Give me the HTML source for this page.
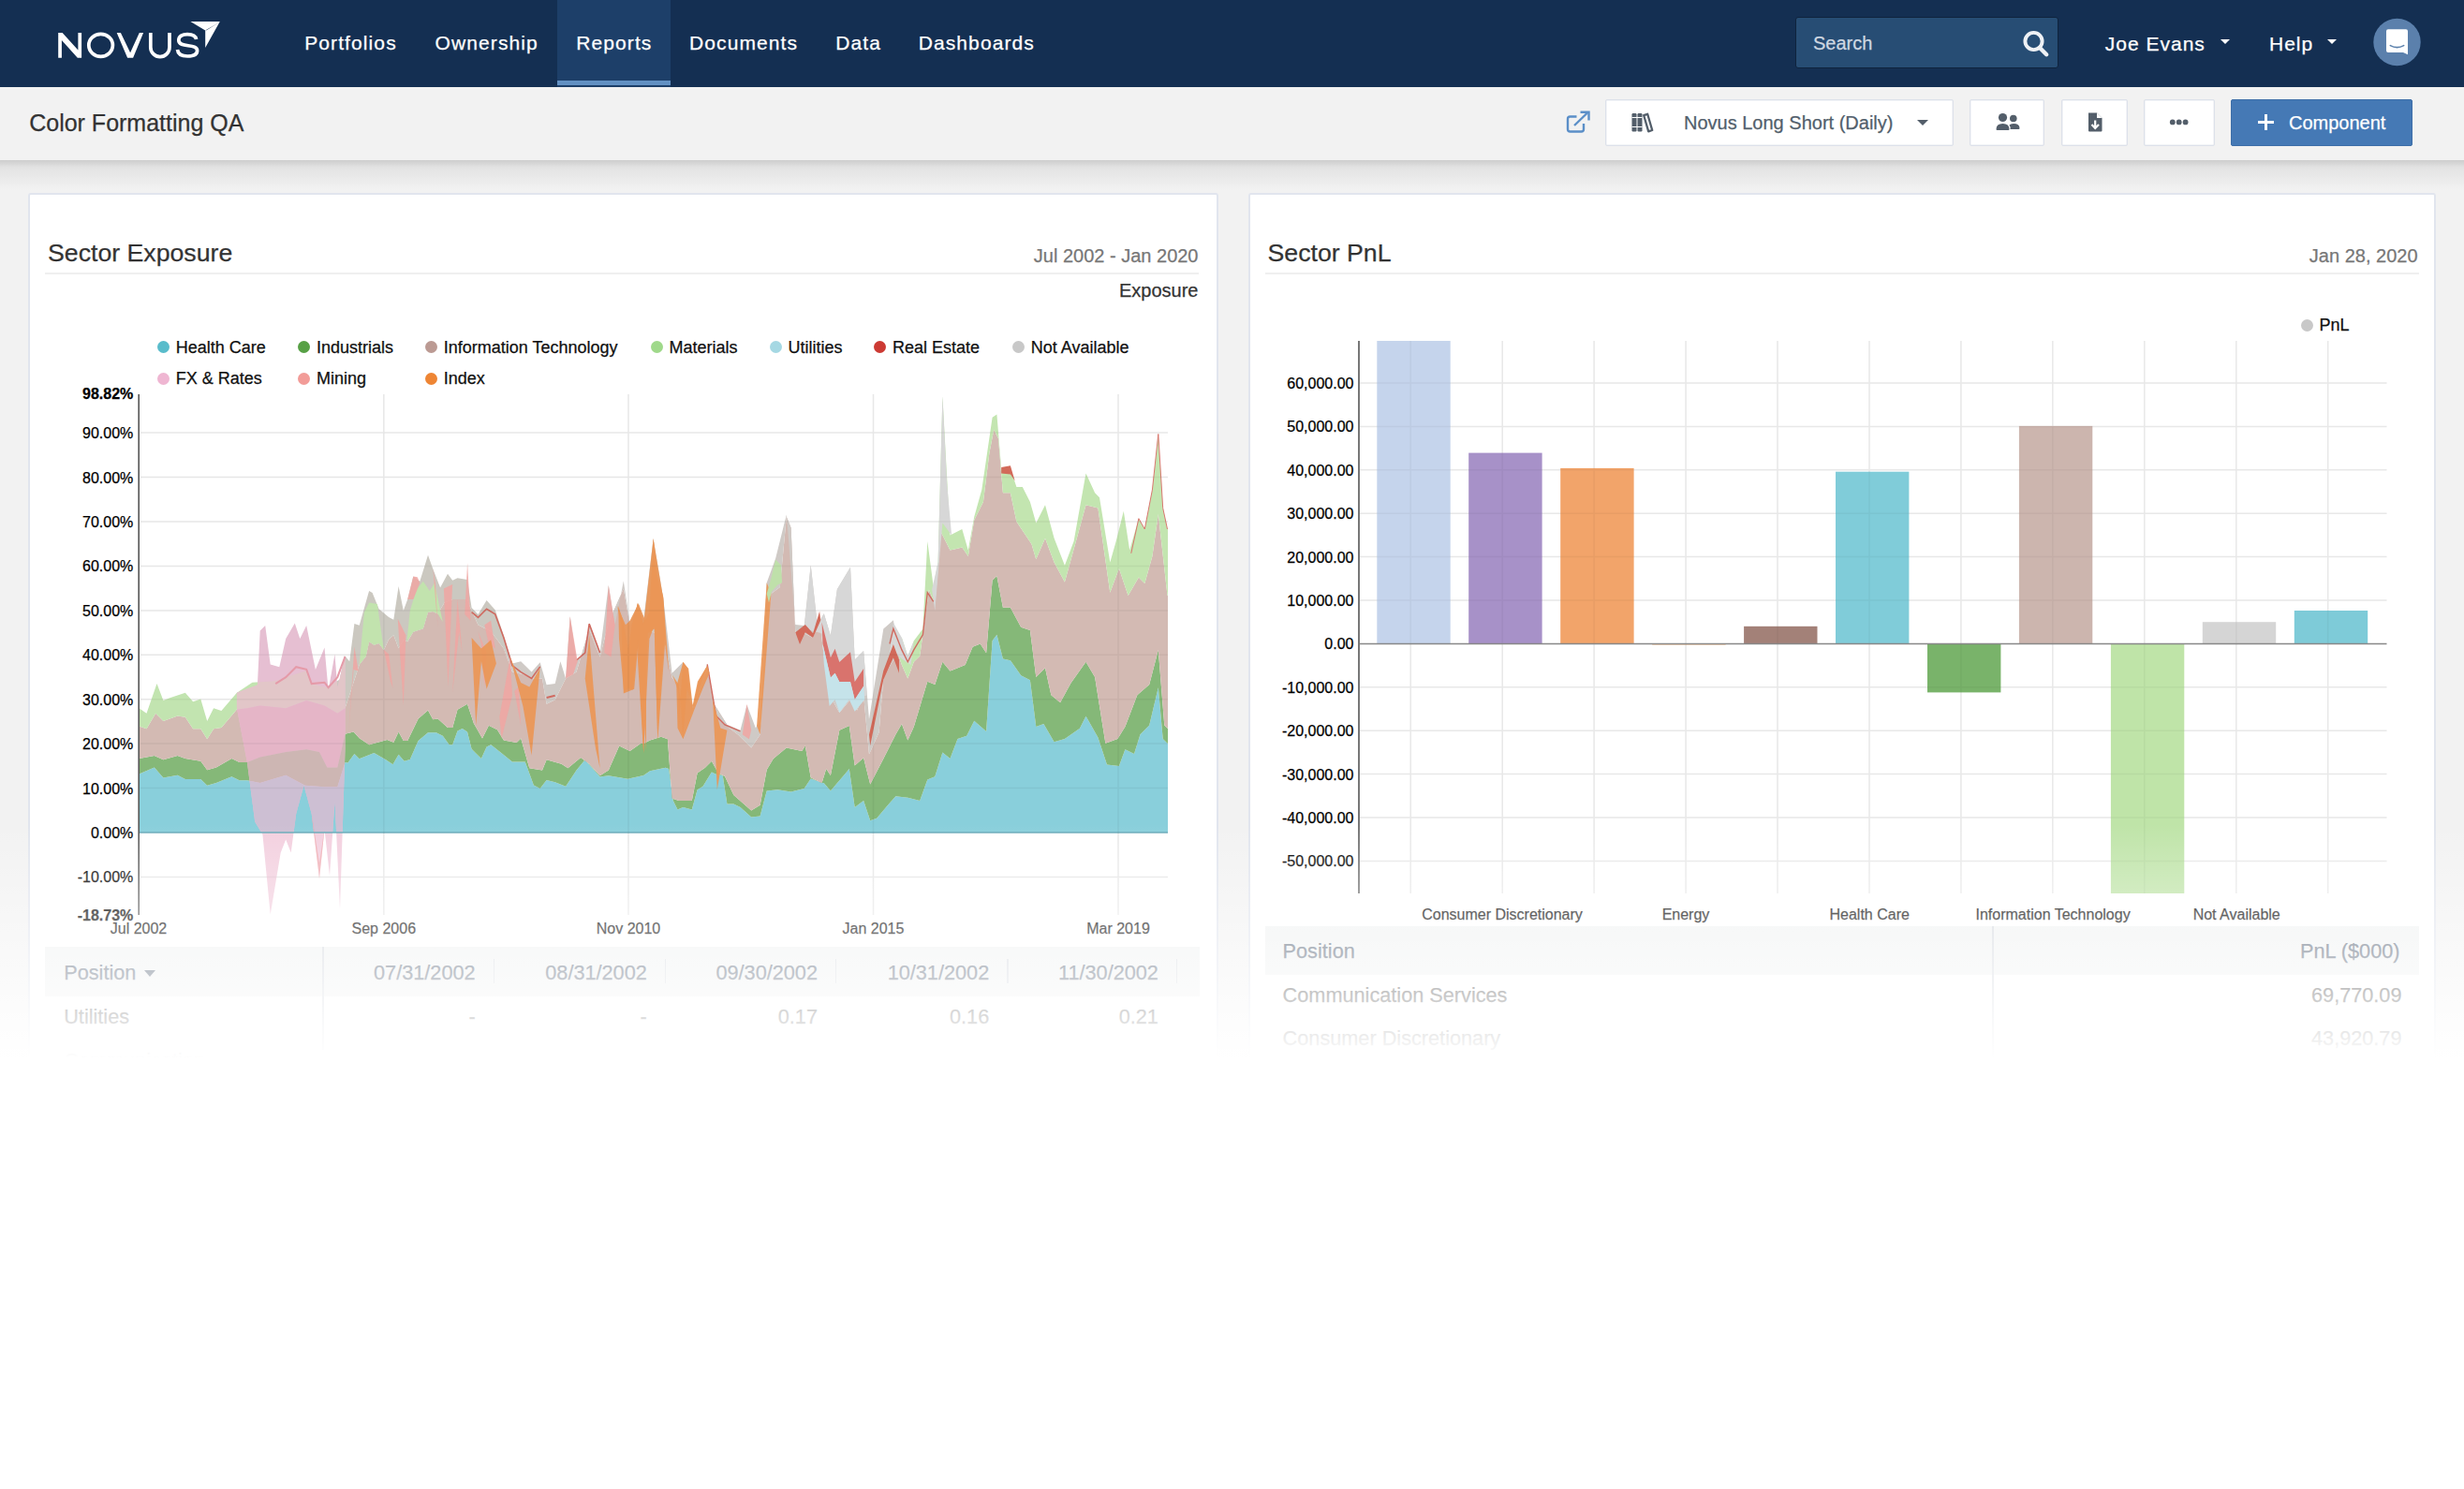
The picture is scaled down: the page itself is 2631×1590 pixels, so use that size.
<!DOCTYPE html>
<html><head><meta charset="utf-8"><title>Color Formatting QA</title>
<style>
html,body{margin:0;padding:0;}
body{width:2631px;height:1590px;position:relative;overflow:hidden;background:#f2f2f2;font-family:"Liberation Sans",sans-serif;}
.t{position:absolute;white-space:nowrap;line-height:1;-webkit-text-stroke:0.25px currentColor;}
#nav{position:absolute;left:0;top:0;width:2631px;height:93px;background:#142f52;}
#sub{position:absolute;left:0;top:93px;width:2631px;height:78px;background:#f2f2f2;}
#shadow{position:absolute;left:0;top:171px;width:2631px;height:32px;background:linear-gradient(#cdcdcd,#e3e3e3 25%,#f2f2f2);}
.btn{position:absolute;top:106px;height:48px;background:#fff;border:1px solid #dde1ea;box-shadow:inset 0 0 0 0.5px #e6e9ef;border-radius:2px;}
.card{position:absolute;top:206px;height:930px;background:#fff;border:2px solid #e1e5ee;border-radius:3px;}
#fade{position:absolute;left:0;top:880px;width:2631px;height:710px;background:linear-gradient(rgba(255,255,255,0) 0px,rgba(255,255,255,1) 250px,#fff 250px);}
</style></head><body>
<div id="nav"></div>
<div style="position:absolute;left:595px;top:0;width:121px;height:93px;background:#1d3f69"></div>
<div style="position:absolute;left:595px;top:86px;width:121px;height:5px;background:#6391c3"></div>
<svg style="position:absolute;left:0;top:0" width="260" height="93" viewBox="0 0 260 93">
<g fill="none" stroke="#fff" stroke-width="3.7" stroke-linejoin="miter">
<ellipse cx="107.6" cy="48.3" rx="12.8" ry="12"/>
<path d="M160.8,34.9 V50.5 A10.1,10.1 0 0 0 181,50.5 V34.9"/>
<path d="M209.6,42 C208.8,37.6 204.5,36.6 200,36.6 C195,36.6 190.8,38.6 190.8,43 C190.8,51.8 210.6,45.8 210.6,54 C210.6,58.3 206,60 200.2,60 C194.4,60 190,57.8 189.5,53"/>
</g>
<polygon fill="#fff" points="62.2,34.9 66.6,34.9 83.4,53.6 83.4,34.9 87.1,34.9 87.1,61.7 82.8,61.7 65.9,42.9 65.9,61.7 62.2,61.7"/>
<polygon fill="#fff" points="124.7,34.9 128.9,34.9 139.1,56.2 148.8,34.9 153.1,34.9 142.1,61.7 136.1,61.7"/>
<polygon fill="#fff" points="203.4,23.1 234.8,23.1 219.2,51 219.2,32.5"/>
<polygon fill="#142f52" points="219.2,32.5 233.5,24.2 220.6,32.2"/>
</svg>
<div class="t" style="top:35.42px;font-size:21px;color:#fff;letter-spacing:1.1px;left:325.20px;">Portfolios</div>
<div class="t" style="top:35.42px;font-size:21px;color:#fff;letter-spacing:1.1px;left:464.60px;">Ownership</div>
<div class="t" style="top:35.42px;font-size:21px;color:#fff;letter-spacing:1.1px;left:615.20px;">Reports</div>
<div class="t" style="top:35.42px;font-size:21px;color:#fff;letter-spacing:1.1px;left:736.00px;">Documents</div>
<div class="t" style="top:35.42px;font-size:21px;color:#fff;letter-spacing:1.1px;left:892.20px;">Data</div>
<div class="t" style="top:35.42px;font-size:21px;color:#fff;letter-spacing:1.1px;left:980.70px;">Dashboards</div>
<div style="position:absolute;left:1917px;top:18px;width:279px;height:53px;background:#274d74;border:1px solid #0f233d;border-radius:3px"></div>
<div class="t" style="top:36.27px;font-size:20px;color:#cfd8e2;left:1936.00px;">Search</div>
<svg style="position:absolute;left:2155px;top:28px" width="40" height="40" viewBox="0 0 40 40">
<circle cx="16.5" cy="16" r="9.1" fill="none" stroke="#eef1f5" stroke-width="3.9"/>
<line x1="23" y1="23" x2="30.2" y2="30.2" stroke="#eef1f5" stroke-width="4.4" stroke-linecap="round"/>
</svg>
<div class="t" style="top:35.72px;font-size:21px;color:#fff;letter-spacing:1px;left:2247.80px;">Joe Evans</div>
<div style="position:absolute;left:2370.5px;top:41.5px;width:0;height:0;border-left:5px solid transparent;border-right:5px solid transparent;border-top:5px solid #fff"></div>
<div class="t" style="top:35.72px;font-size:21px;color:#fff;letter-spacing:1px;left:2423.00px;">Help</div>
<div style="position:absolute;left:2484.5px;top:41.5px;width:0;height:0;border-left:5px solid transparent;border-right:5px solid transparent;border-top:5px solid #fff"></div>
<svg style="position:absolute;left:2530px;top:15px" width="60" height="60" viewBox="0 0 60 60">
<circle cx="29.5" cy="30" r="25.2" fill="#5b80ac"/>
<path d="M20,16.3 Q18,16.3 18,18.3 V39 Q18,41 20,41 H36 L41,43.2 V18.3 Q41,16.3 39,16.3 Z" fill="#fff"/>
<path d="M22.3,33.6 Q29.5,37.6 36.7,33.6" fill="none" stroke="#5b80ac" stroke-width="1.6" stroke-linecap="round"/>
</svg>
<div id="sub"></div>
<div id="shadow"></div>
<div class="t" style="top:118.64px;font-size:25px;color:#333;left:31.20px;">Color Formatting QA</div>
<svg style="position:absolute;left:1670px;top:117px" width="30" height="28" viewBox="0 0 30 28">
<path d="M13.5,7.5 H6.5 Q4,7.5 4,10 V21 Q4,23.5 6.5,23.5 H18.5 Q21,23.5 21,21 V15" fill="none" stroke="#5b8fc8" stroke-width="2.4"/>
<path d="M11,17 L25,3.5" stroke="#5b8fc8" stroke-width="2.4"/>
<path d="M17.5,2.8 H26.5 V11.5" fill="none" stroke="#5b8fc8" stroke-width="2.4"/>
</svg>
<div class="btn" style="left:1714px;width:370px"></div>
<svg style="position:absolute;left:1740px;top:118px" width="28" height="26" viewBox="0 0 28 26">
<rect x="2.5" y="3" width="5" height="19.5" rx="1.2" fill="#535e6a"/>
<rect x="8.5" y="3" width="5" height="19.5" rx="1.2" fill="#535e6a"/>
<path d="M2.5,7.5 H13.5 M2.5,17.5 H13.5" stroke="#fff" stroke-width="1"/>
<path d="M15.2,5.2 L19.2,3.8 L24.2,21 L20.2,22.4 Z" fill="none" stroke="#535e6a" stroke-width="2.3" stroke-linejoin="round"/>
</svg>
<div class="t" style="top:120.67px;font-size:20px;color:#525f6c;left:1798.00px;">Novus Long Short (Daily)</div>
<div style="position:absolute;left:2046.5px;top:128px;width:0;height:0;border-left:6px solid transparent;border-right:6px solid transparent;border-top:6.5px solid #535e6a"></div>
<div class="btn" style="left:2103px;width:78px"></div>
<svg style="position:absolute;left:2128px;top:118px" width="32" height="24" viewBox="0 0 32 24">
<circle cx="10.5" cy="7.5" r="4.6" fill="#535e6a"/>
<circle cx="21.8" cy="8.5" r="3.8" fill="#535e6a"/>
<path d="M3.5,20 Q3.5,14 10.5,14 Q17.5,14 17.5,20 Q17.5,21 16.5,21 H4.5 Q3.5,21 3.5,20 Z" fill="#535e6a"/>
<path d="M18.5,20 H27.5 Q28.5,20 28.5,19 Q28.5,14 22,14 Q18.5,14 17.5,15.5 Q19,17.5 18.5,20 Z" fill="#535e6a"/>
</svg>
<div class="btn" style="left:2201px;width:69px"></div>
<svg style="position:absolute;left:2226px;top:118px" width="22" height="26" viewBox="0 0 22 26">
<path d="M4,2.5 H13 L18.5,8 V21.5 Q18.5,22.5 17.5,22.5 H5 Q4,22.5 4,21.5 Z" fill="#535e6a"/>
<path d="M13,2.5 V8 H18.5" fill="#fff"/>
<path d="M11.2,10.5 V18 M7.5,15 L11.2,19 L15,15" fill="none" stroke="#fff" stroke-width="2.2"/>
</svg>
<div class="btn" style="left:2289px;width:74px"></div>
<svg style="position:absolute;left:2314px;top:125px" width="28" height="12" viewBox="0 0 28 12">
<circle cx="5.8" cy="5.4" r="2.9" fill="#535e6a"/><circle cx="12.7" cy="5.4" r="2.9" fill="#535e6a"/><circle cx="19.6" cy="5.4" r="2.9" fill="#535e6a"/>
</svg>
<div style="position:absolute;left:2382px;top:106px;width:192px;height:48px;background:#4579b5;border:1px solid #3d6ea8;border-radius:2px"></div>
<div style="position:absolute;left:2410.5px;top:129px;width:17.5px;height:3.4px;background:#fff"></div>
<div style="position:absolute;left:2417.6px;top:121.8px;width:3.4px;height:17.5px;background:#fff"></div>
<div class="t" style="top:120.77px;font-size:20px;color:#fff;left:2444.00px;">Component</div>
<div class="card" style="left:30px;width:1267px"></div>
<div class="card" style="left:1333px;width:1264px"></div>
<div style="position:absolute;left:48px;top:291px;width:1232px;height:1.5px;background:#efefef"></div>
<div style="position:absolute;left:1351px;top:291px;width:1232px;height:1.5px;background:#efefef"></div>
<div class="t" style="top:257.20px;font-size:26.7px;color:#333;left:51.00px;">Sector Exposure</div>
<div class="t" style="top:262.57px;font-size:20px;color:#777;right:1351.50px;">Jul 2002 - Jan 2020</div>
<div class="t" style="top:300.37px;font-size:20px;color:#333;right:1351.50px;">Exposure</div>
<div class="t" style="top:256.90px;font-size:26.7px;color:#333;left:1353.50px;">Sector PnL</div>
<div class="t" style="top:262.57px;font-size:20px;color:#777;right:49.50px;">Jan 28, 2020</div>
<div style="position:absolute;left:168.0px;top:364.1px;width:13px;height:13px;border-radius:50%;background:#59bccb"></div>
<div class="t" style="top:361.66px;font-size:18px;color:#111;left:187.80px;">Health Care</div>
<div style="position:absolute;left:318.2px;top:364.1px;width:13px;height:13px;border-radius:50%;background:#57a045"></div>
<div class="t" style="top:361.66px;font-size:18px;color:#111;left:338.00px;">Industrials</div>
<div style="position:absolute;left:454.0px;top:364.1px;width:13px;height:13px;border-radius:50%;background:#bb9a93"></div>
<div class="t" style="top:361.66px;font-size:18px;color:#111;left:473.80px;">Information Technology</div>
<div style="position:absolute;left:694.8px;top:364.1px;width:13px;height:13px;border-radius:50%;background:#9fd98a"></div>
<div class="t" style="top:361.66px;font-size:18px;color:#111;left:714.60px;">Materials</div>
<div style="position:absolute;left:821.8px;top:364.1px;width:13px;height:13px;border-radius:50%;background:#a5d8e3"></div>
<div class="t" style="top:361.66px;font-size:18px;color:#111;left:841.60px;">Utilities</div>
<div style="position:absolute;left:933.2px;top:364.1px;width:13px;height:13px;border-radius:50%;background:#cc3a33"></div>
<div class="t" style="top:361.66px;font-size:18px;color:#111;left:953.00px;">Real Estate</div>
<div style="position:absolute;left:1080.9px;top:364.1px;width:13px;height:13px;border-radius:50%;background:#c8c8c8"></div>
<div class="t" style="top:361.66px;font-size:18px;color:#111;left:1100.70px;">Not Available</div>
<div style="position:absolute;left:168.0px;top:397.5px;width:13px;height:13px;border-radius:50%;background:#efb6d2"></div>
<div class="t" style="top:395.06px;font-size:18px;color:#111;left:187.80px;">FX &amp; Rates</div>
<div style="position:absolute;left:318.2px;top:397.5px;width:13px;height:13px;border-radius:50%;background:#f29c98"></div>
<div class="t" style="top:395.06px;font-size:18px;color:#111;left:338.00px;">Mining</div>
<div style="position:absolute;left:454.0px;top:397.5px;width:13px;height:13px;border-radius:50%;background:#ee8534"></div>
<div class="t" style="top:395.06px;font-size:18px;color:#111;left:473.80px;">Index</div>
<div style="position:absolute;left:2456.7px;top:340.7px;width:13px;height:13px;border-radius:50%;background:#c8c8c8"></div>
<div class="t" style="top:338.06px;font-size:18px;color:#111;left:2476.50px;">PnL</div>
<svg style="position:absolute;left:0;top:0" width="2631" height="1590" viewBox="0 0 2631 1590"><line x1="150" y1="462.1" x2="1247" y2="462.1" stroke="#f3f3f3" stroke-width="1.5"/>
<line x1="150" y1="509.6" x2="1247" y2="509.6" stroke="#f3f3f3" stroke-width="1.5"/>
<line x1="150" y1="557.0" x2="1247" y2="557.0" stroke="#f3f3f3" stroke-width="1.5"/>
<line x1="150" y1="604.4" x2="1247" y2="604.4" stroke="#f3f3f3" stroke-width="1.5"/>
<line x1="150" y1="651.9" x2="1247" y2="651.9" stroke="#f3f3f3" stroke-width="1.5"/>
<line x1="150" y1="699.3" x2="1247" y2="699.3" stroke="#f3f3f3" stroke-width="1.5"/>
<line x1="150" y1="746.7" x2="1247" y2="746.7" stroke="#f3f3f3" stroke-width="1.5"/>
<line x1="150" y1="794.1" x2="1247" y2="794.1" stroke="#f3f3f3" stroke-width="1.5"/>
<line x1="150" y1="841.6" x2="1247" y2="841.6" stroke="#f3f3f3" stroke-width="1.5"/>
<line x1="150" y1="936.4" x2="1247" y2="936.4" stroke="#f3f3f3" stroke-width="1.5"/>
<line x1="409.8" y1="421" x2="409.8" y2="977" stroke="#f3f3f3" stroke-width="1.5"/>
<line x1="671" y1="421" x2="671" y2="977" stroke="#f3f3f3" stroke-width="1.5"/>
<line x1="932.5" y1="421" x2="932.5" y2="977" stroke="#f3f3f3" stroke-width="1.5"/>
<line x1="1194" y1="421" x2="1194" y2="977" stroke="#f3f3f3" stroke-width="1.5"/><polygon fill="#89cfdb" points="148.5,889 148.5,826.4 164.8,819.5 174.4,830.6 189.6,827.8 197.8,831.9 214.3,831.9 221.2,838.8 230.9,836.1 247.4,829.2 255.6,833.3 263.9,833.3 277.7,836.1 305.2,827.8 325.8,838.8 346.5,840.2 360.3,840.2 368.5,814.0 371.4,814.5 378.4,804.9 383.7,810.2 399.4,804.1 411.6,811.0 419.5,816.3 425.6,805.8 431.7,812.8 437.8,811.0 446.6,791.0 457.0,782.2 465.8,782.2 472.8,785.7 479.7,795.3 483.2,795.3 488.5,780.5 493.7,777.9 499.0,781.4 503.6,799.8 513.9,810.1 519.6,797.5 524.2,795.2 535.6,804.3 547.0,813.5 560.7,813.5 569.9,838.6 576.7,842.0 583.6,832.9 592.7,835.2 604.1,839.7 615.5,822.6 624.7,811.2 640.6,829.5 649.8,828.3 670.3,831.8 687.1,828.0 694.1,823.3 710.6,819.7 714.1,820.9 718.8,855.0 723.5,864.4 729.4,862.0 738.8,864.4 744.6,843.2 750.5,839.7 759.9,824.4 764.6,826.8 771.7,828.0 776.4,858.5 783.4,858.5 790.5,862.0 802.2,872.6 811.6,871.5 818.7,844.4 830.4,843.2 844.6,845.6 858.7,842.1 865.7,831.5 879.8,836.2 886.9,844.4 893.9,836.2 901.0,828.0 906.8,820.9 912.7,862.0 922.1,855.0 929.2,876.2 936.2,873.8 948.0,859.7 956.4,850.2 969.3,851.8 982.2,855.1 990.3,832.5 998.3,829.3 1006.4,803.5 1014.5,809.9 1022.5,789.0 1032.2,785.8 1040.2,769.7 1053.1,780.9 1059.6,684.3 1064.4,677.8 1070.9,703.6 1078.9,705.2 1090.2,721.3 1099.9,726.2 1106.3,776.1 1114.4,772.9 1125.6,792.2 1136.9,789.0 1153.0,777.7 1159.5,764.8 1172.4,787.4 1182.0,816.4 1194.9,818.0 1201.4,800.3 1211.0,805.1 1217.5,784.2 1227.2,774.5 1236.8,734.2 1241.7,789.0 1246.5,793.8 1247.0,793.8 1247,889"/>
<polygon fill="#85b878" points="148.5,809.9 164.8,807.1 174.4,811.3 189.6,807.1 197.8,809.9 214.3,812.7 221.2,822.3 230.9,819.5 247.4,809.9 255.6,814.0 263.9,814.0 277.7,808.5 305.2,803.0 327.2,800.3 341.0,803.0 349.3,819.5 360.3,819.5 368.5,783.7 371.4,783.1 377.6,781.4 383.7,788.3 394.1,795.3 413.4,790.1 420.3,792.7 425.6,781.4 430.8,791.0 435.2,791.0 446.6,767.4 457.0,758.6 462.3,768.3 467.5,767.4 478.0,777.0 483.2,777.0 488.5,757.8 499.0,751.7 505.9,772.4 515.0,788.4 521.9,774.7 531.0,779.2 537.9,790.6 551.6,792.9 556.2,788.4 565.3,820.3 579.0,822.6 583.6,811.2 599.5,815.8 606.4,820.3 620.1,808.9 629.2,815.8 640.6,828.3 649.8,822.6 661.2,796.4 672.6,802.1 684.0,794.1 687.1,793.9 694.1,790.4 705.9,786.8 712.9,789.2 717.6,852.6 724.7,855.0 738.8,855.0 744.6,825.6 752.9,819.7 759.9,812.7 767.0,825.6 774.0,829.1 783.4,849.1 802.2,865.6 811.6,859.7 818.7,822.1 825.7,810.3 839.8,798.6 856.3,802.1 859.8,796.2 865.7,830.3 877.5,836.2 882.2,820.9 886.9,828.0 896.3,779.8 906.8,775.1 912.7,817.4 922.1,809.2 929.2,837.4 943.3,810.3 956.4,784.2 962.9,772.9 969.3,790.6 975.8,776.1 990.3,727.8 998.3,731.0 1006.4,706.8 1014.5,716.5 1030.6,710.0 1038.6,690.7 1046.7,687.5 1053.1,697.2 1059.6,619.8 1064.4,615.0 1070.9,648.8 1078.9,648.8 1090.2,669.8 1099.9,673.0 1106.3,722.9 1116.0,713.3 1122.4,742.3 1132.1,750.3 1143.4,729.4 1159.5,706.8 1169.1,722.9 1180.4,793.8 1193.3,789.0 1201.4,776.1 1214.3,742.3 1227.2,731.0 1236.8,693.9 1243.3,774.5 1246.5,777.7 1247.0,777.7 1247.0,793.8 1246.5,793.8 1241.7,789.0 1236.8,734.2 1227.2,774.5 1217.5,784.2 1211.0,805.1 1201.4,800.3 1194.9,818.0 1182.0,816.4 1172.4,787.4 1159.5,764.8 1153.0,777.7 1136.9,789.0 1125.6,792.2 1114.4,772.9 1106.3,776.1 1099.9,726.2 1090.2,721.3 1078.9,705.2 1070.9,703.6 1064.4,677.8 1059.6,684.3 1053.1,780.9 1040.2,769.7 1032.2,785.8 1022.5,789.0 1014.5,809.9 1006.4,803.5 998.3,829.3 990.3,832.5 982.2,855.1 969.3,851.8 956.4,850.2 948.0,859.7 936.2,873.8 929.2,876.2 922.1,855.0 912.7,862.0 906.8,820.9 901.0,828.0 893.9,836.2 886.9,844.4 879.8,836.2 865.7,831.5 858.7,842.1 844.6,845.6 830.4,843.2 818.7,844.4 811.6,871.5 802.2,872.6 790.5,862.0 783.4,858.5 776.4,858.5 771.7,828.0 764.6,826.8 759.9,824.4 750.5,839.7 744.6,843.2 738.8,864.4 729.4,862.0 723.5,864.4 718.8,855.0 714.1,820.9 710.6,819.7 694.1,823.3 687.1,828.0 670.3,831.8 649.8,828.3 640.6,829.5 624.7,811.2 615.5,822.6 604.1,839.7 592.7,835.2 583.6,832.9 576.7,842.0 569.9,838.6 560.7,813.5 547.0,813.5 535.6,804.3 524.2,795.2 519.6,797.5 513.9,810.1 503.6,799.8 499.0,781.4 493.7,777.9 488.5,780.5 483.2,795.3 479.7,795.3 472.8,785.7 465.8,782.2 457.0,782.2 446.6,791.0 437.8,811.0 431.7,812.8 425.6,805.8 419.5,816.3 411.6,811.0 399.4,804.1 383.7,810.2 378.4,804.9 371.4,814.5 368.5,814.0 360.3,840.2 346.5,840.2 325.8,838.8 305.2,827.8 277.7,836.1 263.9,833.3 255.6,833.3 247.4,829.2 230.9,836.1 221.2,838.8 214.3,831.9 197.8,831.9 189.6,827.8 174.4,830.6 164.8,819.5 148.5,826.4"/>
<polygon fill="#d3bab3" points="148.5,775.5 156.5,778.2 166.2,761.7 174.4,770.0 189.6,764.5 197.8,765.8 206.1,778.2 214.3,778.2 221.2,789.3 228.1,778.2 236.4,776.9 252.9,757.6 263.9,756.2 277.7,753.5 305.2,756.2 327.2,748.0 346.5,753.5 360.3,761.7 368.5,756.2 372.3,744.7 383.7,709.7 390.7,701.0 394.1,685.3 399.4,688.8 404.6,687.0 409.9,694.0 415.1,682.7 420.3,678.3 425.6,692.3 430.8,683.5 435.2,685.3 441.3,674.8 451.8,671.3 457.0,653.8 462.3,653.0 467.5,655.6 474.5,643.4 483.2,639.9 499.0,639.9 501.3,646.8 510.5,667.3 524.2,674.2 537.9,692.5 547.0,717.6 558.4,719.9 569.9,724.4 579.0,724.4 583.6,751.8 592.7,747.3 604.1,724.4 615.5,717.6 629.2,671.9 640.6,701.6 649.8,665.0 665.8,628.5 672.6,667.3 681.8,655.9 687.1,671.6 708.2,678.7 717.6,723.4 734.1,744.5 741.1,756.3 755.2,714.0 762.3,751.6 778.7,777.4 788.1,784.5 802.2,798.6 811.6,784.5 816.3,685.7 823.4,634.0 832.8,627.0 839.8,551.8 844.6,563.5 849.3,676.3 858.7,676.3 868.1,681.0 875.1,662.2 884.5,739.8 896.3,761.0 908.0,746.9 915.1,758.6 922.1,742.2 928.0,805.6 938.6,782.1 943.3,723.4 953.9,704.6 956.4,690.7 962.9,710.0 969.3,724.5 975.8,706.8 982.2,700.4 991.9,629.5 998.3,645.6 1004.8,568.2 1014.5,587.6 1027.3,584.4 1033.8,594.0 1040.2,555.4 1049.9,536.0 1056.3,484.5 1061.2,458.7 1066.0,468.3 1070.9,526.3 1078.9,526.3 1085.4,557.0 1101.5,581.1 1106.3,597.2 1116.0,574.7 1125.6,600.5 1136.9,621.4 1149.8,574.7 1159.5,539.2 1172.4,542.5 1185.3,632.7 1194.9,606.9 1204.6,635.9 1215.9,616.6 1222.3,623.0 1230.4,594.0 1236.8,548.9 1246.5,635.9 1247.0,635.9 1247.0,777.7 1246.5,777.7 1243.3,774.5 1236.8,693.9 1227.2,731.0 1214.3,742.3 1201.4,776.1 1193.3,789.0 1180.4,793.8 1169.1,722.9 1159.5,706.8 1143.4,729.4 1132.1,750.3 1122.4,742.3 1116.0,713.3 1106.3,722.9 1099.9,673.0 1090.2,669.8 1078.9,648.8 1070.9,648.8 1064.4,615.0 1059.6,619.8 1053.1,697.2 1046.7,687.5 1038.6,690.7 1030.6,710.0 1014.5,716.5 1006.4,706.8 998.3,731.0 990.3,727.8 975.8,776.1 969.3,790.6 962.9,772.9 956.4,784.2 943.3,810.3 929.2,837.4 922.1,809.2 912.7,817.4 906.8,775.1 896.3,779.8 886.9,828.0 882.2,820.9 877.5,836.2 865.7,830.3 859.8,796.2 856.3,802.1 839.8,798.6 825.7,810.3 818.7,822.1 811.6,859.7 802.2,865.6 783.4,849.1 774.0,829.1 767.0,825.6 759.9,812.7 752.9,819.7 744.6,825.6 738.8,855.0 724.7,855.0 717.6,852.6 712.9,789.2 705.9,786.8 694.1,790.4 687.1,793.9 684.0,794.1 672.6,802.1 661.2,796.4 649.8,822.6 640.6,828.3 629.2,815.8 620.1,808.9 606.4,820.3 599.5,815.8 583.6,811.2 579.0,822.6 565.3,820.3 556.2,788.4 551.6,792.9 537.9,790.6 531.0,779.2 521.9,774.7 515.0,788.4 505.9,772.4 499.0,751.7 488.5,757.8 483.2,777.0 478.0,777.0 467.5,767.4 462.3,768.3 457.0,758.6 446.6,767.4 435.2,791.0 430.8,791.0 425.6,781.4 420.3,792.7 413.4,790.1 394.1,795.3 383.7,788.3 377.6,781.4 371.4,783.1 368.5,783.7 360.3,819.5 349.3,819.5 341.0,803.0 327.2,800.3 305.2,803.0 277.7,808.5 263.9,814.0 255.6,814.0 247.4,809.9 230.9,819.5 221.2,822.3 214.3,812.7 197.8,809.9 189.6,807.1 174.4,811.3 164.8,807.1 148.5,809.9"/>
<defs>
<clipPath id="cg1"><rect x="0" y="380" width="360" height="620"/></clipPath>
<clipPath id="cg2"><rect x="360" y="380" width="180" height="620"/></clipPath>
<clipPath id="cg4"><rect x="540" y="380" width="415" height="620"/></clipPath>
<clipPath id="cg5"><rect x="955" y="380" width="345" height="620"/></clipPath>
</defs>
<polygon clip-path="url(#cg1)" fill="#c2e4b0" points="148.5,756.2 156.5,761.7 167.5,730.1 174.4,748.0 181.3,745.2 197.8,739.7 206.1,749.3 214.3,746.6 221.2,770.0 228.1,756.2 236.4,759.0 252.9,739.7 269.4,728.7 294.2,727.3 313.5,720.4 327.2,716.3 332.7,730.1 349.3,734.2 362.7,725.5 367.9,700.1 373.2,706.2 378.4,666.1 383.7,667.8 394.1,631.1 397.6,632.9 404.6,650.3 415.1,659.1 420.3,661.7 425.6,625.9 430.8,652.1 435.2,639.9 441.3,615.4 448.3,620.7 457.0,592.7 462.3,607.6 470.1,627.6 478.0,612.8 483.2,619.8 488.5,617.2 499.0,618.9 503.6,649.1 510.5,655.9 519.6,641.1 528.7,651.3 537.9,678.7 547.0,708.4 556.2,706.2 567.6,717.6 576.7,707.3 583.6,731.3 592.7,730.1 598.4,706.2 604.1,724.4 608.7,658.2 615.5,705.0 624.7,697.0 629.2,665.0 640.6,697.0 649.8,625.1 656.6,667.3 665.8,620.5 672.6,665.0 681.8,644.5 687.1,662.2 697.6,575.3 708.2,638.7 717.6,718.7 729.4,706.9 738.8,756.3 755.2,709.3 764.6,763.3 774.0,772.7 790.5,779.8 797.5,752.7 806.9,777.4 811.6,768.0 818.7,622.3 828.1,596.4 839.8,549.4 849.3,666.9 858.7,668.1 865.7,603.5 872.8,666.9 879.8,655.2 886.9,678.7 893.9,629.3 908.0,605.8 912.7,704.6 922.1,695.1 928.0,768.0 943.3,671.6 953.9,662.2 956.4,677.8 962.9,681.0 969.3,700.4 975.8,684.3 985.4,671.4 990.3,577.9 996.7,626.3 1001.6,600.5 1006.4,423.2 1014.5,571.5 1027.3,565.0 1033.8,587.6 1040.2,552.1 1048.3,523.1 1059.6,445.8 1064.4,442.6 1069.2,500.6 1078.9,500.6 1085.4,519.9 1091.8,519.9 1099.9,536.0 1106.3,558.6 1116.0,539.2 1125.6,574.7 1136.9,603.7 1146.6,577.9 1159.5,505.4 1169.1,526.3 1174.0,531.2 1185.3,600.5 1191.7,577.9 1199.8,545.7 1206.2,587.6 1215.9,553.7 1222.3,565.0 1230.4,523.1 1236.8,463.5 1241.7,542.5 1246.5,565.0 1247.0,565.0 1247.0,635.9 1246.5,635.9 1236.8,548.9 1230.4,594.0 1222.3,623.0 1215.9,616.6 1204.6,635.9 1194.9,606.9 1185.3,632.7 1172.4,542.5 1159.5,539.2 1149.8,574.7 1136.9,621.4 1125.6,600.5 1116.0,574.7 1106.3,597.2 1101.5,581.1 1085.4,557.0 1078.9,526.3 1070.9,526.3 1066.0,468.3 1061.2,458.7 1056.3,484.5 1049.9,536.0 1040.2,555.4 1033.8,594.0 1027.3,584.4 1014.5,587.6 1004.8,568.2 998.3,645.6 991.9,629.5 982.2,700.4 975.8,706.8 969.3,724.5 962.9,710.0 956.4,690.7 953.9,704.6 943.3,723.4 938.6,782.1 928.0,805.6 922.1,742.2 915.1,758.6 908.0,746.9 896.3,761.0 884.5,739.8 875.1,662.2 868.1,681.0 858.7,676.3 849.3,676.3 844.6,563.5 839.8,551.8 832.8,627.0 823.4,634.0 816.3,685.7 811.6,784.5 802.2,798.6 788.1,784.5 778.7,777.4 762.3,751.6 755.2,714.0 741.1,756.3 734.1,744.5 717.6,723.4 708.2,678.7 687.1,671.6 681.8,655.9 672.6,667.3 665.8,628.5 649.8,665.0 640.6,701.6 629.2,671.9 615.5,717.6 604.1,724.4 592.7,747.3 583.6,751.8 579.0,724.4 569.9,724.4 558.4,719.9 547.0,717.6 537.9,692.5 524.2,674.2 510.5,667.3 501.3,646.8 499.0,639.9 483.2,639.9 474.5,643.4 467.5,655.6 462.3,653.0 457.0,653.8 451.8,671.3 441.3,674.8 435.2,685.3 430.8,683.5 425.6,692.3 420.3,678.3 415.1,682.7 409.9,694.0 404.6,687.0 399.4,688.8 394.1,685.3 390.7,701.0 383.7,709.7 372.3,744.7 368.5,756.2 360.3,761.7 346.5,753.5 327.2,748.0 305.2,756.2 277.7,753.5 263.9,756.2 252.9,757.6 236.4,776.9 228.1,778.2 221.2,789.3 214.3,778.2 206.1,778.2 197.8,765.8 189.6,764.5 174.4,770.0 166.2,761.7 156.5,778.2 148.5,775.5"/>
<polygon clip-path="url(#cg2)" fill="#cbc8c0" points="148.5,756.2 156.5,761.7 167.5,730.1 174.4,748.0 181.3,745.2 197.8,739.7 206.1,749.3 214.3,746.6 221.2,770.0 228.1,756.2 236.4,759.0 252.9,739.7 269.4,728.7 294.2,727.3 313.5,720.4 327.2,716.3 332.7,730.1 349.3,734.2 362.7,725.5 367.9,700.1 373.2,706.2 378.4,666.1 383.7,667.8 394.1,631.1 397.6,632.9 404.6,650.3 415.1,659.1 420.3,661.7 425.6,625.9 430.8,652.1 435.2,639.9 441.3,615.4 448.3,620.7 457.0,592.7 462.3,607.6 470.1,627.6 478.0,612.8 483.2,619.8 488.5,617.2 499.0,618.9 503.6,649.1 510.5,655.9 519.6,641.1 528.7,651.3 537.9,678.7 547.0,708.4 556.2,706.2 567.6,717.6 576.7,707.3 583.6,731.3 592.7,730.1 598.4,706.2 604.1,724.4 608.7,658.2 615.5,705.0 624.7,697.0 629.2,665.0 640.6,697.0 649.8,625.1 656.6,667.3 665.8,620.5 672.6,665.0 681.8,644.5 687.1,662.2 697.6,575.3 708.2,638.7 717.6,718.7 729.4,706.9 738.8,756.3 755.2,709.3 764.6,763.3 774.0,772.7 790.5,779.8 797.5,752.7 806.9,777.4 811.6,768.0 818.7,622.3 828.1,596.4 839.8,549.4 849.3,666.9 858.7,668.1 865.7,603.5 872.8,666.9 879.8,655.2 886.9,678.7 893.9,629.3 908.0,605.8 912.7,704.6 922.1,695.1 928.0,768.0 943.3,671.6 953.9,662.2 956.4,677.8 962.9,681.0 969.3,700.4 975.8,684.3 985.4,671.4 990.3,577.9 996.7,626.3 1001.6,600.5 1006.4,423.2 1014.5,571.5 1027.3,565.0 1033.8,587.6 1040.2,552.1 1048.3,523.1 1059.6,445.8 1064.4,442.6 1069.2,500.6 1078.9,500.6 1085.4,519.9 1091.8,519.9 1099.9,536.0 1106.3,558.6 1116.0,539.2 1125.6,574.7 1136.9,603.7 1146.6,577.9 1159.5,505.4 1169.1,526.3 1174.0,531.2 1185.3,600.5 1191.7,577.9 1199.8,545.7 1206.2,587.6 1215.9,553.7 1222.3,565.0 1230.4,523.1 1236.8,463.5 1241.7,542.5 1246.5,565.0 1247.0,565.0 1247.0,635.9 1246.5,635.9 1236.8,548.9 1230.4,594.0 1222.3,623.0 1215.9,616.6 1204.6,635.9 1194.9,606.9 1185.3,632.7 1172.4,542.5 1159.5,539.2 1149.8,574.7 1136.9,621.4 1125.6,600.5 1116.0,574.7 1106.3,597.2 1101.5,581.1 1085.4,557.0 1078.9,526.3 1070.9,526.3 1066.0,468.3 1061.2,458.7 1056.3,484.5 1049.9,536.0 1040.2,555.4 1033.8,594.0 1027.3,584.4 1014.5,587.6 1004.8,568.2 998.3,645.6 991.9,629.5 982.2,700.4 975.8,706.8 969.3,724.5 962.9,710.0 956.4,690.7 953.9,704.6 943.3,723.4 938.6,782.1 928.0,805.6 922.1,742.2 915.1,758.6 908.0,746.9 896.3,761.0 884.5,739.8 875.1,662.2 868.1,681.0 858.7,676.3 849.3,676.3 844.6,563.5 839.8,551.8 832.8,627.0 823.4,634.0 816.3,685.7 811.6,784.5 802.2,798.6 788.1,784.5 778.7,777.4 762.3,751.6 755.2,714.0 741.1,756.3 734.1,744.5 717.6,723.4 708.2,678.7 687.1,671.6 681.8,655.9 672.6,667.3 665.8,628.5 649.8,665.0 640.6,701.6 629.2,671.9 615.5,717.6 604.1,724.4 592.7,747.3 583.6,751.8 579.0,724.4 569.9,724.4 558.4,719.9 547.0,717.6 537.9,692.5 524.2,674.2 510.5,667.3 501.3,646.8 499.0,639.9 483.2,639.9 474.5,643.4 467.5,655.6 462.3,653.0 457.0,653.8 451.8,671.3 441.3,674.8 435.2,685.3 430.8,683.5 425.6,692.3 420.3,678.3 415.1,682.7 409.9,694.0 404.6,687.0 399.4,688.8 394.1,685.3 390.7,701.0 383.7,709.7 372.3,744.7 368.5,756.2 360.3,761.7 346.5,753.5 327.2,748.0 305.2,756.2 277.7,753.5 263.9,756.2 252.9,757.6 236.4,776.9 228.1,778.2 221.2,789.3 214.3,778.2 206.1,778.2 197.8,765.8 189.6,764.5 174.4,770.0 166.2,761.7 156.5,778.2 148.5,775.5"/>
<polygon clip-path="url(#cg4)" fill="#cfcac6" points="148.5,756.2 156.5,761.7 167.5,730.1 174.4,748.0 181.3,745.2 197.8,739.7 206.1,749.3 214.3,746.6 221.2,770.0 228.1,756.2 236.4,759.0 252.9,739.7 269.4,728.7 294.2,727.3 313.5,720.4 327.2,716.3 332.7,730.1 349.3,734.2 362.7,725.5 367.9,700.1 373.2,706.2 378.4,666.1 383.7,667.8 394.1,631.1 397.6,632.9 404.6,650.3 415.1,659.1 420.3,661.7 425.6,625.9 430.8,652.1 435.2,639.9 441.3,615.4 448.3,620.7 457.0,592.7 462.3,607.6 470.1,627.6 478.0,612.8 483.2,619.8 488.5,617.2 499.0,618.9 503.6,649.1 510.5,655.9 519.6,641.1 528.7,651.3 537.9,678.7 547.0,708.4 556.2,706.2 567.6,717.6 576.7,707.3 583.6,731.3 592.7,730.1 598.4,706.2 604.1,724.4 608.7,658.2 615.5,705.0 624.7,697.0 629.2,665.0 640.6,697.0 649.8,625.1 656.6,667.3 665.8,620.5 672.6,665.0 681.8,644.5 687.1,662.2 697.6,575.3 708.2,638.7 717.6,718.7 729.4,706.9 738.8,756.3 755.2,709.3 764.6,763.3 774.0,772.7 790.5,779.8 797.5,752.7 806.9,777.4 811.6,768.0 818.7,622.3 828.1,596.4 839.8,549.4 849.3,666.9 858.7,668.1 865.7,603.5 872.8,666.9 879.8,655.2 886.9,678.7 893.9,629.3 908.0,605.8 912.7,704.6 922.1,695.1 928.0,768.0 943.3,671.6 953.9,662.2 956.4,677.8 962.9,681.0 969.3,700.4 975.8,684.3 985.4,671.4 990.3,577.9 996.7,626.3 1001.6,600.5 1006.4,423.2 1014.5,571.5 1027.3,565.0 1033.8,587.6 1040.2,552.1 1048.3,523.1 1059.6,445.8 1064.4,442.6 1069.2,500.6 1078.9,500.6 1085.4,519.9 1091.8,519.9 1099.9,536.0 1106.3,558.6 1116.0,539.2 1125.6,574.7 1136.9,603.7 1146.6,577.9 1159.5,505.4 1169.1,526.3 1174.0,531.2 1185.3,600.5 1191.7,577.9 1199.8,545.7 1206.2,587.6 1215.9,553.7 1222.3,565.0 1230.4,523.1 1236.8,463.5 1241.7,542.5 1246.5,565.0 1247.0,565.0 1247.0,635.9 1246.5,635.9 1236.8,548.9 1230.4,594.0 1222.3,623.0 1215.9,616.6 1204.6,635.9 1194.9,606.9 1185.3,632.7 1172.4,542.5 1159.5,539.2 1149.8,574.7 1136.9,621.4 1125.6,600.5 1116.0,574.7 1106.3,597.2 1101.5,581.1 1085.4,557.0 1078.9,526.3 1070.9,526.3 1066.0,468.3 1061.2,458.7 1056.3,484.5 1049.9,536.0 1040.2,555.4 1033.8,594.0 1027.3,584.4 1014.5,587.6 1004.8,568.2 998.3,645.6 991.9,629.5 982.2,700.4 975.8,706.8 969.3,724.5 962.9,710.0 956.4,690.7 953.9,704.6 943.3,723.4 938.6,782.1 928.0,805.6 922.1,742.2 915.1,758.6 908.0,746.9 896.3,761.0 884.5,739.8 875.1,662.2 868.1,681.0 858.7,676.3 849.3,676.3 844.6,563.5 839.8,551.8 832.8,627.0 823.4,634.0 816.3,685.7 811.6,784.5 802.2,798.6 788.1,784.5 778.7,777.4 762.3,751.6 755.2,714.0 741.1,756.3 734.1,744.5 717.6,723.4 708.2,678.7 687.1,671.6 681.8,655.9 672.6,667.3 665.8,628.5 649.8,665.0 640.6,701.6 629.2,671.9 615.5,717.6 604.1,724.4 592.7,747.3 583.6,751.8 579.0,724.4 569.9,724.4 558.4,719.9 547.0,717.6 537.9,692.5 524.2,674.2 510.5,667.3 501.3,646.8 499.0,639.9 483.2,639.9 474.5,643.4 467.5,655.6 462.3,653.0 457.0,653.8 451.8,671.3 441.3,674.8 435.2,685.3 430.8,683.5 425.6,692.3 420.3,678.3 415.1,682.7 409.9,694.0 404.6,687.0 399.4,688.8 394.1,685.3 390.7,701.0 383.7,709.7 372.3,744.7 368.5,756.2 360.3,761.7 346.5,753.5 327.2,748.0 305.2,756.2 277.7,753.5 263.9,756.2 252.9,757.6 236.4,776.9 228.1,778.2 221.2,789.3 214.3,778.2 206.1,778.2 197.8,765.8 189.6,764.5 174.4,770.0 166.2,761.7 156.5,778.2 148.5,775.5"/>
<polygon clip-path="url(#cg5)" fill="#c3e5b0" points="148.5,756.2 156.5,761.7 167.5,730.1 174.4,748.0 181.3,745.2 197.8,739.7 206.1,749.3 214.3,746.6 221.2,770.0 228.1,756.2 236.4,759.0 252.9,739.7 269.4,728.7 294.2,727.3 313.5,720.4 327.2,716.3 332.7,730.1 349.3,734.2 362.7,725.5 367.9,700.1 373.2,706.2 378.4,666.1 383.7,667.8 394.1,631.1 397.6,632.9 404.6,650.3 415.1,659.1 420.3,661.7 425.6,625.9 430.8,652.1 435.2,639.9 441.3,615.4 448.3,620.7 457.0,592.7 462.3,607.6 470.1,627.6 478.0,612.8 483.2,619.8 488.5,617.2 499.0,618.9 503.6,649.1 510.5,655.9 519.6,641.1 528.7,651.3 537.9,678.7 547.0,708.4 556.2,706.2 567.6,717.6 576.7,707.3 583.6,731.3 592.7,730.1 598.4,706.2 604.1,724.4 608.7,658.2 615.5,705.0 624.7,697.0 629.2,665.0 640.6,697.0 649.8,625.1 656.6,667.3 665.8,620.5 672.6,665.0 681.8,644.5 687.1,662.2 697.6,575.3 708.2,638.7 717.6,718.7 729.4,706.9 738.8,756.3 755.2,709.3 764.6,763.3 774.0,772.7 790.5,779.8 797.5,752.7 806.9,777.4 811.6,768.0 818.7,622.3 828.1,596.4 839.8,549.4 849.3,666.9 858.7,668.1 865.7,603.5 872.8,666.9 879.8,655.2 886.9,678.7 893.9,629.3 908.0,605.8 912.7,704.6 922.1,695.1 928.0,768.0 943.3,671.6 953.9,662.2 956.4,677.8 962.9,681.0 969.3,700.4 975.8,684.3 985.4,671.4 990.3,577.9 996.7,626.3 1001.6,600.5 1006.4,423.2 1014.5,571.5 1027.3,565.0 1033.8,587.6 1040.2,552.1 1048.3,523.1 1059.6,445.8 1064.4,442.6 1069.2,500.6 1078.9,500.6 1085.4,519.9 1091.8,519.9 1099.9,536.0 1106.3,558.6 1116.0,539.2 1125.6,574.7 1136.9,603.7 1146.6,577.9 1159.5,505.4 1169.1,526.3 1174.0,531.2 1185.3,600.5 1191.7,577.9 1199.8,545.7 1206.2,587.6 1215.9,553.7 1222.3,565.0 1230.4,523.1 1236.8,463.5 1241.7,542.5 1246.5,565.0 1247.0,565.0 1247.0,635.9 1246.5,635.9 1236.8,548.9 1230.4,594.0 1222.3,623.0 1215.9,616.6 1204.6,635.9 1194.9,606.9 1185.3,632.7 1172.4,542.5 1159.5,539.2 1149.8,574.7 1136.9,621.4 1125.6,600.5 1116.0,574.7 1106.3,597.2 1101.5,581.1 1085.4,557.0 1078.9,526.3 1070.9,526.3 1066.0,468.3 1061.2,458.7 1056.3,484.5 1049.9,536.0 1040.2,555.4 1033.8,594.0 1027.3,584.4 1014.5,587.6 1004.8,568.2 998.3,645.6 991.9,629.5 982.2,700.4 975.8,706.8 969.3,724.5 962.9,710.0 956.4,690.7 953.9,704.6 943.3,723.4 938.6,782.1 928.0,805.6 922.1,742.2 915.1,758.6 908.0,746.9 896.3,761.0 884.5,739.8 875.1,662.2 868.1,681.0 858.7,676.3 849.3,676.3 844.6,563.5 839.8,551.8 832.8,627.0 823.4,634.0 816.3,685.7 811.6,784.5 802.2,798.6 788.1,784.5 778.7,777.4 762.3,751.6 755.2,714.0 741.1,756.3 734.1,744.5 717.6,723.4 708.2,678.7 687.1,671.6 681.8,655.9 672.6,667.3 665.8,628.5 649.8,665.0 640.6,701.6 629.2,671.9 615.5,717.6 604.1,724.4 592.7,747.3 583.6,751.8 579.0,724.4 569.9,724.4 558.4,719.9 547.0,717.6 537.9,692.5 524.2,674.2 510.5,667.3 501.3,646.8 499.0,639.9 483.2,639.9 474.5,643.4 467.5,655.6 462.3,653.0 457.0,653.8 451.8,671.3 441.3,674.8 435.2,685.3 430.8,683.5 425.6,692.3 420.3,678.3 415.1,682.7 409.9,694.0 404.6,687.0 399.4,688.8 394.1,685.3 390.7,701.0 383.7,709.7 372.3,744.7 368.5,756.2 360.3,761.7 346.5,753.5 327.2,748.0 305.2,756.2 277.7,753.5 263.9,756.2 252.9,757.6 236.4,776.9 228.1,778.2 221.2,789.3 214.3,778.2 206.1,778.2 197.8,765.8 189.6,764.5 174.4,770.0 166.2,761.7 156.5,778.2 148.5,775.5"/>
<polygon fill="#c2e3ae" points="383.7,709.7 388.9,653.8 394.1,643.4 402.9,645.1 408.1,681.8 409.9,694.0 404.6,687.0 399.4,688.8 394.1,685.3 390.7,701.0"/>
<polygon fill="#c2e3ae" points="434.3,685.3 437.8,652.1 444.8,629.4 451.8,620.7 458.8,631.1 464.0,622.4 472.8,664.3 467.5,655.6 462.3,653.0 457.0,653.8 451.8,671.3 441.3,674.8"/>
<polygon fill="#f0a6a2" fill-opacity="0.85" points="372.3,781.4 378.4,690.5 382.8,716.7 377.6,715.0"/>
<polygon fill="#f0a6a2" fill-opacity="0.85" points="409.9,694.0 415.1,698.4 419.5,735.1 416.9,727.2"/>
<polygon fill="#f0a6a2" fill-opacity="0.85" points="424.7,660.8 430.8,753.4 433.4,678.3"/>
<polygon fill="#f0a6a2" fill-opacity="0.85" points="435.2,639.9 441.3,615.4 445.7,616.3 448.3,622.4 441.3,639.9"/>
<polygon fill="#f0a6a2" fill-opacity="0.85" points="462.3,606.7 467.5,669.6 464.9,622.4"/>
<polygon fill="#f0a6a2" fill-opacity="0.85" points="483.2,739.4 488.5,639.9 493.7,697.5 490.2,674.8"/>
<polygon fill="#d7d7d7" points="858.7,671.6 865.7,603.5 872.8,668.1 879.8,655.2 886.9,678.7 893.9,629.3 908.0,605.8 912.7,704.6 922.1,695.1 925.7,742.2 915.1,746.9 905.7,732.8 891.6,725.7 884.5,718.7 877.5,676.3"/>
<polygon fill="#d7d7d7" points="995.1,629.5 1001.6,600.5 1006.4,423.2 1011.2,516.7 1016.1,571.5 1006.4,558.6 998.3,652.0"/>
<polygon fill="#d7d7d7" points="950.0,697.2 953.9,664.9 962.9,681.0 969.3,700.4 975.8,684.3 972.6,710.0 962.9,703.6 956.4,697.2"/>
<polygon fill="#d9736d" points="877.5,664.6 886.9,702.2 891.6,692.8 896.3,706.9 908.0,696.3 912.7,728.1 922.1,714.0 922.1,732.8 912.7,746.9 908.0,728.1 896.3,728.1 891.6,718.7 886.9,723.4 878.6,688.1"/>
<polygon fill="#c5e3ea" points="878.6,688.1 886.9,723.4 891.6,718.7 896.3,728.1 908.0,728.1 912.7,746.9 922.1,732.8 923.3,746.9 912.7,759.8 906.8,746.9 896.3,761.0 891.6,746.9 885.7,753.9 879.8,709.3"/>
<polygon fill="#d26a5a" points="928.0,784.5 943.3,716.3 953.9,688.1 960.0,704.6 960.0,718.7 953.9,702.2 943.3,725.7 929.2,796.2"/>
<polygon fill="#d26a5a" points="849.3,675.2 859.8,666.9 868.1,676.3 875.1,652.8 876.3,662.2 868.1,681.0 859.8,675.2 854.0,688.1"/>
<polygon fill="#d26a5a" points="1069.2,499.0 1078.9,497.3 1083.7,513.5 1078.9,506.4 1069.2,505.4"/>
<polyline fill="none" stroke="#d06a60" stroke-width="1.6" points="503.6,653.6 510.5,659.3 519.6,650.2 528.7,655.9 537.9,681.0 547.0,710.7 556.2,717.6 567.6,724.4 576.7,711.9"/>
<polyline fill="none" stroke="#d06a60" stroke-width="2.2" points="583.6,745.0 592.7,742.7"/>
<polyline fill="none" stroke="#d06a60" stroke-width="1.6" points="615.5,705.0 624.7,697.0 629.2,666.2 640.6,697.0"/>
<polyline fill="none" stroke="#d06a60" stroke-width="1.4" points="755.2,709.3 764.6,764.5 774.0,773.9 790.5,780.9"/>
<polyline fill="none" stroke="#d9776f" stroke-width="1.0" points="1207.8,590.8 1215.9,553.7 1222.3,565.0 1230.4,523.1 1236.8,463.5 1241.7,542.5 1246.5,565.0"/>
<polyline fill="none" stroke="#d06a60" stroke-width="1.4" points="950.0,687.5 953.9,671.4 962.9,693.9 969.3,706.8 975.8,693.9 985.4,677.8 990.3,632.7 996.7,642.4"/>
<polygon fill="#f0a6a2" fill-opacity="0.85" points="604.1,724.4 608.7,658.2 616.7,706.2 612.1,719.9"/>
<polygon fill="#f0a6a2" fill-opacity="0.85" points="645.2,697.0 649.8,625.1 656.6,667.3 652.5,701.6"/>
<polygon fill="#f0a6a2" fill-opacity="0.85" points="496.3,655.9 499.1,601.1 502.5,662.8"/>
<polygon fill="#f0a6a2" fill-opacity="0.85" points="473.9,628.5 478.5,733.6 483.1,623.9"/>
<polygon fill="#f0a6a2" fill-opacity="0.85" points="517.3,667.3 524.2,662.8 528.7,692.5 521.9,687.9"/>
<polygon fill="#f0a6a2" fill-opacity="0.85" points="533.3,765.5 544.7,701.6 547.0,742.7 535.6,788.4"/>
<polygon fill="#f0a6a2" fill-opacity="0.85" points="549.3,738.1 556.2,774.7 553.9,733.6"/>
<polygon fill="#f0a6a2" fill-opacity="0.85" points="510.5,674.2 519.6,697.0 517.3,733.6 513.9,687.9"/>
<polygon fill="#f0a6a2" fill-opacity="0.85" points="792.8,784.5 797.5,751.6 802.2,779.8 799.9,789.2"/>
<defs><clipPath id="pinkclip"><polygon points="252.9,739.7 274.9,731.4 277.7,673.6 283.2,668.1 288.7,709.4 298.3,712.2 305.2,681.9 314.8,665.4 320.3,681.9 327.2,668.1 336.9,714.9 346.5,691.5 350.6,736.9 357.5,698.4 360.3,734.2 368.5,701.1 368.5,800.3 363.0,971.0 357.5,855.3 352.0,935.2 346.5,885.6 341.0,937.9 332.7,869.1 324.5,838.8 316.2,869.1 310.7,910.4 305.2,896.6 299.7,910.4 288.7,976.5 280.4,891.1 272.2,877.4 263.9,814.0 252.9,756.2"/></clipPath></defs>
<g clip-path="url(#pinkclip)">
<rect x="240" y="600" width="140" height="289" fill="#e6bfd2"/>
<rect x="240" y="889" width="140" height="100" fill="#f3d0df"/>
<polygon fill="#e2c6c8" points="148.5,756.2 156.5,761.7 167.5,730.1 174.4,748.0 181.3,745.2 197.8,739.7 206.1,749.3 214.3,746.6 221.2,770.0 228.1,756.2 236.4,759.0 252.9,739.7 269.4,728.7 294.2,727.3 313.5,720.4 327.2,716.3 332.7,730.1 349.3,734.2 362.7,725.5 367.9,700.1 373.2,706.2 378.4,666.1 383.7,667.8 394.1,631.1 397.6,632.9 404.6,650.3 415.1,659.1 420.3,661.7 425.6,625.9 430.8,652.1 435.2,639.9 441.3,615.4 448.3,620.7 457.0,592.7 462.3,607.6 470.1,627.6 478.0,612.8 483.2,619.8 488.5,617.2 499.0,618.9 503.6,649.1 510.5,655.9 519.6,641.1 528.7,651.3 537.9,678.7 547.0,708.4 556.2,706.2 567.6,717.6 576.7,707.3 583.6,731.3 592.7,730.1 598.4,706.2 604.1,724.4 608.7,658.2 615.5,705.0 624.7,697.0 629.2,665.0 640.6,697.0 649.8,625.1 656.6,667.3 665.8,620.5 672.6,665.0 681.8,644.5 687.1,662.2 697.6,575.3 708.2,638.7 717.6,718.7 729.4,706.9 738.8,756.3 755.2,709.3 764.6,763.3 774.0,772.7 790.5,779.8 797.5,752.7 806.9,777.4 811.6,768.0 818.7,622.3 828.1,596.4 839.8,549.4 849.3,666.9 858.7,668.1 865.7,603.5 872.8,666.9 879.8,655.2 886.9,678.7 893.9,629.3 908.0,605.8 912.7,704.6 922.1,695.1 928.0,768.0 943.3,671.6 953.9,662.2 956.4,677.8 962.9,681.0 969.3,700.4 975.8,684.3 985.4,671.4 990.3,577.9 996.7,626.3 1001.6,600.5 1006.4,423.2 1014.5,571.5 1027.3,565.0 1033.8,587.6 1040.2,552.1 1048.3,523.1 1059.6,445.8 1064.4,442.6 1069.2,500.6 1078.9,500.6 1085.4,519.9 1091.8,519.9 1099.9,536.0 1106.3,558.6 1116.0,539.2 1125.6,574.7 1136.9,603.7 1146.6,577.9 1159.5,505.4 1169.1,526.3 1174.0,531.2 1185.3,600.5 1191.7,577.9 1199.8,545.7 1206.2,587.6 1215.9,553.7 1222.3,565.0 1230.4,523.1 1236.8,463.5 1241.7,542.5 1246.5,565.0 1247.0,565.0 1247.0,635.9 1246.5,635.9 1236.8,548.9 1230.4,594.0 1222.3,623.0 1215.9,616.6 1204.6,635.9 1194.9,606.9 1185.3,632.7 1172.4,542.5 1159.5,539.2 1149.8,574.7 1136.9,621.4 1125.6,600.5 1116.0,574.7 1106.3,597.2 1101.5,581.1 1085.4,557.0 1078.9,526.3 1070.9,526.3 1066.0,468.3 1061.2,458.7 1056.3,484.5 1049.9,536.0 1040.2,555.4 1033.8,594.0 1027.3,584.4 1014.5,587.6 1004.8,568.2 998.3,645.6 991.9,629.5 982.2,700.4 975.8,706.8 969.3,724.5 962.9,710.0 956.4,690.7 953.9,704.6 943.3,723.4 938.6,782.1 928.0,805.6 922.1,742.2 915.1,758.6 908.0,746.9 896.3,761.0 884.5,739.8 875.1,662.2 868.1,681.0 858.7,676.3 849.3,676.3 844.6,563.5 839.8,551.8 832.8,627.0 823.4,634.0 816.3,685.7 811.6,784.5 802.2,798.6 788.1,784.5 778.7,777.4 762.3,751.6 755.2,714.0 741.1,756.3 734.1,744.5 717.6,723.4 708.2,678.7 687.1,671.6 681.8,655.9 672.6,667.3 665.8,628.5 649.8,665.0 640.6,701.6 629.2,671.9 615.5,717.6 604.1,724.4 592.7,747.3 583.6,751.8 579.0,724.4 569.9,724.4 558.4,719.9 547.0,717.6 537.9,692.5 524.2,674.2 510.5,667.3 501.3,646.8 499.0,639.9 483.2,639.9 474.5,643.4 467.5,655.6 462.3,653.0 457.0,653.8 451.8,671.3 441.3,674.8 435.2,685.3 430.8,683.5 425.6,692.3 420.3,678.3 415.1,682.7 409.9,694.0 404.6,687.0 399.4,688.8 394.1,685.3 390.7,701.0 383.7,709.7 372.3,744.7 368.5,756.2 360.3,761.7 346.5,753.5 327.2,748.0 305.2,756.2 277.7,753.5 263.9,756.2 252.9,757.6 236.4,776.9 228.1,778.2 221.2,789.3 214.3,778.2 206.1,778.2 197.8,765.8 189.6,764.5 174.4,770.0 166.2,761.7 156.5,778.2 148.5,775.5"/>
<polygon fill="#e5b5c7" points="148.5,775.5 156.5,778.2 166.2,761.7 174.4,770.0 189.6,764.5 197.8,765.8 206.1,778.2 214.3,778.2 221.2,789.3 228.1,778.2 236.4,776.9 252.9,757.6 263.9,756.2 277.7,753.5 305.2,756.2 327.2,748.0 346.5,753.5 360.3,761.7 368.5,756.2 372.3,744.7 383.7,709.7 390.7,701.0 394.1,685.3 399.4,688.8 404.6,687.0 409.9,694.0 415.1,682.7 420.3,678.3 425.6,692.3 430.8,683.5 435.2,685.3 441.3,674.8 451.8,671.3 457.0,653.8 462.3,653.0 467.5,655.6 474.5,643.4 483.2,639.9 499.0,639.9 501.3,646.8 510.5,667.3 524.2,674.2 537.9,692.5 547.0,717.6 558.4,719.9 569.9,724.4 579.0,724.4 583.6,751.8 592.7,747.3 604.1,724.4 615.5,717.6 629.2,671.9 640.6,701.6 649.8,665.0 665.8,628.5 672.6,667.3 681.8,655.9 687.1,671.6 708.2,678.7 717.6,723.4 734.1,744.5 741.1,756.3 755.2,714.0 762.3,751.6 778.7,777.4 788.1,784.5 802.2,798.6 811.6,784.5 816.3,685.7 823.4,634.0 832.8,627.0 839.8,551.8 844.6,563.5 849.3,676.3 858.7,676.3 868.1,681.0 875.1,662.2 884.5,739.8 896.3,761.0 908.0,746.9 915.1,758.6 922.1,742.2 928.0,805.6 938.6,782.1 943.3,723.4 953.9,704.6 956.4,690.7 962.9,710.0 969.3,724.5 975.8,706.8 982.2,700.4 991.9,629.5 998.3,645.6 1004.8,568.2 1014.5,587.6 1027.3,584.4 1033.8,594.0 1040.2,555.4 1049.9,536.0 1056.3,484.5 1061.2,458.7 1066.0,468.3 1070.9,526.3 1078.9,526.3 1085.4,557.0 1101.5,581.1 1106.3,597.2 1116.0,574.7 1125.6,600.5 1136.9,621.4 1149.8,574.7 1159.5,539.2 1172.4,542.5 1185.3,632.7 1194.9,606.9 1204.6,635.9 1215.9,616.6 1222.3,623.0 1230.4,594.0 1236.8,548.9 1246.5,635.9 1247.0,635.9 1247.0,777.7 1246.5,777.7 1243.3,774.5 1236.8,693.9 1227.2,731.0 1214.3,742.3 1201.4,776.1 1193.3,789.0 1180.4,793.8 1169.1,722.9 1159.5,706.8 1143.4,729.4 1132.1,750.3 1122.4,742.3 1116.0,713.3 1106.3,722.9 1099.9,673.0 1090.2,669.8 1078.9,648.8 1070.9,648.8 1064.4,615.0 1059.6,619.8 1053.1,697.2 1046.7,687.5 1038.6,690.7 1030.6,710.0 1014.5,716.5 1006.4,706.8 998.3,731.0 990.3,727.8 975.8,776.1 969.3,790.6 962.9,772.9 956.4,784.2 943.3,810.3 929.2,837.4 922.1,809.2 912.7,817.4 906.8,775.1 896.3,779.8 886.9,828.0 882.2,820.9 877.5,836.2 865.7,830.3 859.8,796.2 856.3,802.1 839.8,798.6 825.7,810.3 818.7,822.1 811.6,859.7 802.2,865.6 783.4,849.1 774.0,829.1 767.0,825.6 759.9,812.7 752.9,819.7 744.6,825.6 738.8,855.0 724.7,855.0 717.6,852.6 712.9,789.2 705.9,786.8 694.1,790.4 687.1,793.9 684.0,794.1 672.6,802.1 661.2,796.4 649.8,822.6 640.6,828.3 629.2,815.8 620.1,808.9 606.4,820.3 599.5,815.8 583.6,811.2 579.0,822.6 565.3,820.3 556.2,788.4 551.6,792.9 537.9,790.6 531.0,779.2 521.9,774.7 515.0,788.4 505.9,772.4 499.0,751.7 488.5,757.8 483.2,777.0 478.0,777.0 467.5,767.4 462.3,768.3 457.0,758.6 446.6,767.4 435.2,791.0 430.8,791.0 425.6,781.4 420.3,792.7 413.4,790.1 394.1,795.3 383.7,788.3 377.6,781.4 371.4,783.1 368.5,783.7 360.3,819.5 349.3,819.5 341.0,803.0 327.2,800.3 305.2,803.0 277.7,808.5 263.9,814.0 255.6,814.0 247.4,809.9 230.9,819.5 221.2,822.3 214.3,812.7 197.8,809.9 189.6,807.1 174.4,811.3 164.8,807.1 148.5,809.9"/>
<polygon fill="#cdb6b3" points="148.5,809.9 164.8,807.1 174.4,811.3 189.6,807.1 197.8,809.9 214.3,812.7 221.2,822.3 230.9,819.5 247.4,809.9 255.6,814.0 263.9,814.0 277.7,808.5 305.2,803.0 327.2,800.3 341.0,803.0 349.3,819.5 360.3,819.5 368.5,783.7 371.4,783.1 377.6,781.4 383.7,788.3 394.1,795.3 413.4,790.1 420.3,792.7 425.6,781.4 430.8,791.0 435.2,791.0 446.6,767.4 457.0,758.6 462.3,768.3 467.5,767.4 478.0,777.0 483.2,777.0 488.5,757.8 499.0,751.7 505.9,772.4 515.0,788.4 521.9,774.7 531.0,779.2 537.9,790.6 551.6,792.9 556.2,788.4 565.3,820.3 579.0,822.6 583.6,811.2 599.5,815.8 606.4,820.3 620.1,808.9 629.2,815.8 640.6,828.3 649.8,822.6 661.2,796.4 672.6,802.1 684.0,794.1 687.1,793.9 694.1,790.4 705.9,786.8 712.9,789.2 717.6,852.6 724.7,855.0 738.8,855.0 744.6,825.6 752.9,819.7 759.9,812.7 767.0,825.6 774.0,829.1 783.4,849.1 802.2,865.6 811.6,859.7 818.7,822.1 825.7,810.3 839.8,798.6 856.3,802.1 859.8,796.2 865.7,830.3 877.5,836.2 882.2,820.9 886.9,828.0 896.3,779.8 906.8,775.1 912.7,817.4 922.1,809.2 929.2,837.4 943.3,810.3 956.4,784.2 962.9,772.9 969.3,790.6 975.8,776.1 990.3,727.8 998.3,731.0 1006.4,706.8 1014.5,716.5 1030.6,710.0 1038.6,690.7 1046.7,687.5 1053.1,697.2 1059.6,619.8 1064.4,615.0 1070.9,648.8 1078.9,648.8 1090.2,669.8 1099.9,673.0 1106.3,722.9 1116.0,713.3 1122.4,742.3 1132.1,750.3 1143.4,729.4 1159.5,706.8 1169.1,722.9 1180.4,793.8 1193.3,789.0 1201.4,776.1 1214.3,742.3 1227.2,731.0 1236.8,693.9 1243.3,774.5 1246.5,777.7 1247.0,777.7 1247.0,793.8 1246.5,793.8 1241.7,789.0 1236.8,734.2 1227.2,774.5 1217.5,784.2 1211.0,805.1 1201.4,800.3 1194.9,818.0 1182.0,816.4 1172.4,787.4 1159.5,764.8 1153.0,777.7 1136.9,789.0 1125.6,792.2 1114.4,772.9 1106.3,776.1 1099.9,726.2 1090.2,721.3 1078.9,705.2 1070.9,703.6 1064.4,677.8 1059.6,684.3 1053.1,780.9 1040.2,769.7 1032.2,785.8 1022.5,789.0 1014.5,809.9 1006.4,803.5 998.3,829.3 990.3,832.5 982.2,855.1 969.3,851.8 956.4,850.2 948.0,859.7 936.2,873.8 929.2,876.2 922.1,855.0 912.7,862.0 906.8,820.9 901.0,828.0 893.9,836.2 886.9,844.4 879.8,836.2 865.7,831.5 858.7,842.1 844.6,845.6 830.4,843.2 818.7,844.4 811.6,871.5 802.2,872.6 790.5,862.0 783.4,858.5 776.4,858.5 771.7,828.0 764.6,826.8 759.9,824.4 750.5,839.7 744.6,843.2 738.8,864.4 729.4,862.0 723.5,864.4 718.8,855.0 714.1,820.9 710.6,819.7 694.1,823.3 687.1,828.0 670.3,831.8 649.8,828.3 640.6,829.5 624.7,811.2 615.5,822.6 604.1,839.7 592.7,835.2 583.6,832.9 576.7,842.0 569.9,838.6 560.7,813.5 547.0,813.5 535.6,804.3 524.2,795.2 519.6,797.5 513.9,810.1 503.6,799.8 499.0,781.4 493.7,777.9 488.5,780.5 483.2,795.3 479.7,795.3 472.8,785.7 465.8,782.2 457.0,782.2 446.6,791.0 437.8,811.0 431.7,812.8 425.6,805.8 419.5,816.3 411.6,811.0 399.4,804.1 383.7,810.2 378.4,804.9 371.4,814.5 368.5,814.0 360.3,840.2 346.5,840.2 325.8,838.8 305.2,827.8 277.7,836.1 263.9,833.3 255.6,833.3 247.4,829.2 230.9,836.1 221.2,838.8 214.3,831.9 197.8,831.9 189.6,827.8 174.4,830.6 164.8,819.5 148.5,826.4"/>
<polygon fill="#cdbfd3" points="148.5,889 148.5,826.4 164.8,819.5 174.4,830.6 189.6,827.8 197.8,831.9 214.3,831.9 221.2,838.8 230.9,836.1 247.4,829.2 255.6,833.3 263.9,833.3 277.7,836.1 305.2,827.8 325.8,838.8 346.5,840.2 360.3,840.2 368.5,814.0 371.4,814.5 378.4,804.9 383.7,810.2 399.4,804.1 411.6,811.0 419.5,816.3 425.6,805.8 431.7,812.8 437.8,811.0 446.6,791.0 457.0,782.2 465.8,782.2 472.8,785.7 479.7,795.3 483.2,795.3 488.5,780.5 493.7,777.9 499.0,781.4 503.6,799.8 513.9,810.1 519.6,797.5 524.2,795.2 535.6,804.3 547.0,813.5 560.7,813.5 569.9,838.6 576.7,842.0 583.6,832.9 592.7,835.2 604.1,839.7 615.5,822.6 624.7,811.2 640.6,829.5 649.8,828.3 670.3,831.8 687.1,828.0 694.1,823.3 710.6,819.7 714.1,820.9 718.8,855.0 723.5,864.4 729.4,862.0 738.8,864.4 744.6,843.2 750.5,839.7 759.9,824.4 764.6,826.8 771.7,828.0 776.4,858.5 783.4,858.5 790.5,862.0 802.2,872.6 811.6,871.5 818.7,844.4 830.4,843.2 844.6,845.6 858.7,842.1 865.7,831.5 879.8,836.2 886.9,844.4 893.9,836.2 901.0,828.0 906.8,820.9 912.7,862.0 922.1,855.0 929.2,876.2 936.2,873.8 948.0,859.7 956.4,850.2 969.3,851.8 982.2,855.1 990.3,832.5 998.3,829.3 1006.4,803.5 1014.5,809.9 1022.5,789.0 1032.2,785.8 1040.2,769.7 1053.1,780.9 1059.6,684.3 1064.4,677.8 1070.9,703.6 1078.9,705.2 1090.2,721.3 1099.9,726.2 1106.3,776.1 1114.4,772.9 1125.6,792.2 1136.9,789.0 1153.0,777.7 1159.5,764.8 1172.4,787.4 1182.0,816.4 1194.9,818.0 1201.4,800.3 1211.0,805.1 1217.5,784.2 1227.2,774.5 1236.8,734.2 1241.7,789.0 1246.5,793.8 1247.0,793.8 1247,889"/>
</g>
<polygon fill="#f0a0a0" fill-opacity="0.6" points="332.7,869.1 341.0,937.9 346.5,885.6 345.1,893.9 341.0,921.4 334.1,877.4"/>
<polyline fill="none" stroke="#e59aa8" stroke-width="2" points="294.2,730.1 305.2,723.2 316.2,712.2 327.2,714.9 332.7,730.1 346.5,728.7 350.6,734.2 360.3,723.2 368.5,701.1"/>
<polygon fill="#ea9656" fill-opacity="0.92" points="503.6,681.0 513.9,692.5 524.2,683.3 529.9,708.4 519.6,735.8 513.9,706.2 508.2,774.7"/>
<polygon fill="#ea9656" fill-opacity="0.92" points="544.7,701.6 556.2,729.0 565.3,733.6 576.7,713.0 567.6,806.6 558.4,754.1"/>
<polygon fill="#ea9656" fill-opacity="0.92" points="624.7,724.4 629.2,678.7 640.6,820.3 636.1,799.8"/>
<polygon fill="#ea9656" fill-opacity="0.92" points="658.9,646.8 668.0,667.3 672.6,662.8 681.8,644.5 690.0,665.0 690.0,802.1 681.8,683.3 677.2,735.8 665.8,740.4 663.5,667.3"/>
<polygon fill="#ea9656" fill-opacity="0.92" points="680.0,643.4 687.1,666.9 697.6,575.3 708.2,638.7 710.6,681.0 702.3,791.5 698.8,671.6 691.8,676.3 687.1,803.3 680.0,690.4"/>
<polygon fill="#ea9656" fill-opacity="0.92" points="722.3,732.8 729.4,706.9 735.2,714.0 739.9,756.3 745.8,728.1 755.2,710.4 757.6,718.7 750.5,735.1 741.1,758.6 729.4,789.2 723.5,777.4"/>
<polygon fill="#ea9656" fill-opacity="0.92" points="761.1,746.9 769.3,777.4 776.4,779.8 765.8,843.2"/>
<polygon fill="#ea9656" fill-opacity="0.92" points="808.1,775.1 818.7,622.3 823.4,634.0 811.6,784.5"/>
<polygon fill="#bfe0aa" points="818.7,634.0 823.4,617.6 828.1,597.6 834.0,603.5 835.1,622.3 830.4,624.6 823.9,631.7 821.0,643.4"/>
<polygon fill="#ea9656" fill-opacity="0.92" points="660.2,647.3 665.4,663.1 670.7,692.8 675.9,661.3 681.1,643.8 686.4,666.6 693.4,654.3 697.7,574.8 702.1,615.9 708.2,636.9 714.3,717.2 709.1,682.3 702.1,787.1 698.6,668.3 693.4,682.3 687.2,804.5 681.1,682.3 675.9,736.4 670.7,734.7 666.3,739.9 661.0,682.3"/>
<polygon fill="#ea9656" fill-opacity="0.92" points="717.8,720.7 724.8,731.2 724.8,776.6 729.2,706.7 734.4,713.7 738.8,757.4 744.9,727.7 754.5,712.0 745.8,736.4 740.5,755.6 733.5,734.7 729.2,788.8 726.6,743.4"/>
<line x1="148.5" y1="889" x2="1247" y2="889" stroke="#6aaab8" stroke-width="1.5"/><g opacity="0.045"><line x1="150" y1="462.1" x2="1247" y2="462.1" stroke="#000" stroke-width="1.5"/><line x1="150" y1="509.6" x2="1247" y2="509.6" stroke="#000" stroke-width="1.5"/><line x1="150" y1="557.0" x2="1247" y2="557.0" stroke="#000" stroke-width="1.5"/><line x1="150" y1="604.4" x2="1247" y2="604.4" stroke="#000" stroke-width="1.5"/><line x1="150" y1="651.9" x2="1247" y2="651.9" stroke="#000" stroke-width="1.5"/><line x1="150" y1="699.3" x2="1247" y2="699.3" stroke="#000" stroke-width="1.5"/><line x1="150" y1="746.7" x2="1247" y2="746.7" stroke="#000" stroke-width="1.5"/><line x1="150" y1="794.1" x2="1247" y2="794.1" stroke="#000" stroke-width="1.5"/><line x1="150" y1="841.6" x2="1247" y2="841.6" stroke="#000" stroke-width="1.5"/><line x1="150" y1="936.4" x2="1247" y2="936.4" stroke="#000" stroke-width="1.5"/><line x1="409.8" y1="421" x2="409.8" y2="977" stroke="#000" stroke-width="1.5"/><line x1="671" y1="421" x2="671" y2="977" stroke="#000" stroke-width="1.5"/><line x1="932.5" y1="421" x2="932.5" y2="977" stroke="#000" stroke-width="1.5"/><line x1="1194" y1="421" x2="1194" y2="977" stroke="#000" stroke-width="1.5"/></g><line x1="148.2" y1="421" x2="148.2" y2="977" stroke="#555" stroke-width="1.6"/><line x1="1452" y1="409.0" x2="2548.5" y2="409.0" stroke="#f2f2f2" stroke-width="1.5"/>
<line x1="1452" y1="455.4" x2="2548.5" y2="455.4" stroke="#f2f2f2" stroke-width="1.5"/>
<line x1="1452" y1="501.8" x2="2548.5" y2="501.8" stroke="#f2f2f2" stroke-width="1.5"/>
<line x1="1452" y1="548.2" x2="2548.5" y2="548.2" stroke="#f2f2f2" stroke-width="1.5"/>
<line x1="1452" y1="594.6" x2="2548.5" y2="594.6" stroke="#f2f2f2" stroke-width="1.5"/>
<line x1="1452" y1="641.0" x2="2548.5" y2="641.0" stroke="#f2f2f2" stroke-width="1.5"/>
<line x1="1452" y1="733.8" x2="2548.5" y2="733.8" stroke="#f2f2f2" stroke-width="1.5"/>
<line x1="1452" y1="780.2" x2="2548.5" y2="780.2" stroke="#f2f2f2" stroke-width="1.5"/>
<line x1="1452" y1="826.6" x2="2548.5" y2="826.6" stroke="#f2f2f2" stroke-width="1.5"/>
<line x1="1452" y1="873.0" x2="2548.5" y2="873.0" stroke="#f2f2f2" stroke-width="1.5"/>
<line x1="1452" y1="919.4" x2="2548.5" y2="919.4" stroke="#f2f2f2" stroke-width="1.5"/>
<line x1="1506.2" y1="364" x2="1506.2" y2="954" stroke="#f2f2f2" stroke-width="1.5"/>
<line x1="1604.2" y1="364" x2="1604.2" y2="954" stroke="#f2f2f2" stroke-width="1.5"/>
<line x1="1702.1" y1="364" x2="1702.1" y2="954" stroke="#f2f2f2" stroke-width="1.5"/>
<line x1="1800.1" y1="364" x2="1800.1" y2="954" stroke="#f2f2f2" stroke-width="1.5"/>
<line x1="1898.0" y1="364" x2="1898.0" y2="954" stroke="#f2f2f2" stroke-width="1.5"/>
<line x1="1996.0" y1="364" x2="1996.0" y2="954" stroke="#f2f2f2" stroke-width="1.5"/>
<line x1="2093.9" y1="364" x2="2093.9" y2="954" stroke="#f2f2f2" stroke-width="1.5"/>
<line x1="2191.8" y1="364" x2="2191.8" y2="954" stroke="#f2f2f2" stroke-width="1.5"/>
<line x1="2289.8" y1="364" x2="2289.8" y2="954" stroke="#f2f2f2" stroke-width="1.5"/>
<line x1="2387.8" y1="364" x2="2387.8" y2="954" stroke="#f2f2f2" stroke-width="1.5"/>
<line x1="2485.7" y1="364" x2="2485.7" y2="954" stroke="#f2f2f2" stroke-width="1.5"/><rect x="1470.3" y="364.0" width="78.4" height="323.4" fill="#c5d4ec"/>
<rect x="1568.2" y="483.6" width="78.4" height="203.8" fill="#a791c8"/>
<rect x="1666.2" y="499.9" width="78.4" height="187.5" fill="#f2a46a"/>
<rect x="1764.2" y="687.4" width="78.4" height="1.2" fill="#f5c08f"/>
<rect x="1862.1" y="668.8" width="78.4" height="18.6" fill="#a38178"/>
<rect x="1960.0" y="503.7" width="78.4" height="183.7" fill="#80ccd9"/>
<rect x="2058.0" y="687.4" width="78.4" height="52.0" fill="#79b36a"/>
<rect x="2155.9" y="454.9" width="78.4" height="232.5" fill="#ccb5ae"/>
<rect x="2253.9" y="687.4" width="78.4" height="266.6" fill="#bfe4a8"/>
<rect x="2351.8" y="664.2" width="78.4" height="23.2" fill="#d5d5d5"/>
<rect x="2449.8" y="652.0" width="78.4" height="35.4" fill="#7ecbd8"/><g opacity="0.035"><line x1="1452" y1="409.0" x2="2548.5" y2="409.0" stroke="#000" stroke-width="1.5"/><line x1="1452" y1="455.4" x2="2548.5" y2="455.4" stroke="#000" stroke-width="1.5"/><line x1="1452" y1="501.8" x2="2548.5" y2="501.8" stroke="#000" stroke-width="1.5"/><line x1="1452" y1="548.2" x2="2548.5" y2="548.2" stroke="#000" stroke-width="1.5"/><line x1="1452" y1="594.6" x2="2548.5" y2="594.6" stroke="#000" stroke-width="1.5"/><line x1="1452" y1="641.0" x2="2548.5" y2="641.0" stroke="#000" stroke-width="1.5"/><line x1="1452" y1="733.8" x2="2548.5" y2="733.8" stroke="#000" stroke-width="1.5"/><line x1="1452" y1="780.2" x2="2548.5" y2="780.2" stroke="#000" stroke-width="1.5"/><line x1="1452" y1="826.6" x2="2548.5" y2="826.6" stroke="#000" stroke-width="1.5"/><line x1="1452" y1="873.0" x2="2548.5" y2="873.0" stroke="#000" stroke-width="1.5"/><line x1="1452" y1="919.4" x2="2548.5" y2="919.4" stroke="#000" stroke-width="1.5"/><line x1="1506.2" y1="364" x2="1506.2" y2="954" stroke="#000" stroke-width="1.5"/><line x1="1604.2" y1="364" x2="1604.2" y2="954" stroke="#000" stroke-width="1.5"/><line x1="1702.1" y1="364" x2="1702.1" y2="954" stroke="#000" stroke-width="1.5"/><line x1="1800.1" y1="364" x2="1800.1" y2="954" stroke="#000" stroke-width="1.5"/><line x1="1898.0" y1="364" x2="1898.0" y2="954" stroke="#000" stroke-width="1.5"/><line x1="1996.0" y1="364" x2="1996.0" y2="954" stroke="#000" stroke-width="1.5"/><line x1="2093.9" y1="364" x2="2093.9" y2="954" stroke="#000" stroke-width="1.5"/><line x1="2191.8" y1="364" x2="2191.8" y2="954" stroke="#000" stroke-width="1.5"/><line x1="2289.8" y1="364" x2="2289.8" y2="954" stroke="#000" stroke-width="1.5"/><line x1="2387.8" y1="364" x2="2387.8" y2="954" stroke="#000" stroke-width="1.5"/><line x1="2485.7" y1="364" x2="2485.7" y2="954" stroke="#000" stroke-width="1.5"/></g><line x1="1452" y1="687.4" x2="2548.5" y2="687.4" stroke="#888" stroke-width="1.5"/><line x1="1451" y1="364" x2="1451" y2="954" stroke="#555" stroke-width="1.6"/></svg>
<div class="t" style="top:412.86px;font-size:16px;color:#000;font-weight:bold;right:2488.70px;">98.82%</div>
<div class="t" style="top:455.09px;font-size:16px;color:#000;right:2488.70px;">90.00%</div>
<div class="t" style="top:502.52px;font-size:16px;color:#000;right:2488.70px;">80.00%</div>
<div class="t" style="top:549.95px;font-size:16px;color:#000;right:2488.70px;">70.00%</div>
<div class="t" style="top:597.38px;font-size:16px;color:#000;right:2488.70px;">60.00%</div>
<div class="t" style="top:644.81px;font-size:16px;color:#000;right:2488.70px;">50.00%</div>
<div class="t" style="top:692.24px;font-size:16px;color:#000;right:2488.70px;">40.00%</div>
<div class="t" style="top:739.67px;font-size:16px;color:#000;right:2488.70px;">30.00%</div>
<div class="t" style="top:787.10px;font-size:16px;color:#000;right:2488.70px;">20.00%</div>
<div class="t" style="top:834.53px;font-size:16px;color:#000;right:2488.70px;">10.00%</div>
<div class="t" style="top:881.96px;font-size:16px;color:#000;right:2488.70px;">0.00%</div>
<div class="t" style="top:929.39px;font-size:16px;color:#000;right:2488.70px;">-10.00%</div>
<div class="t" style="top:969.66px;font-size:16px;color:#000;font-weight:bold;right:2488.70px;">-18.73%</div>
<div class="t" style="top:983.66px;font-size:16px;color:#000;left:148.00px;transform:translateX(-50%);">Jul 2002</div>
<div class="t" style="top:983.66px;font-size:16px;color:#000;left:409.80px;transform:translateX(-50%);">Sep 2006</div>
<div class="t" style="top:983.66px;font-size:16px;color:#000;left:671.00px;transform:translateX(-50%);">Nov 2010</div>
<div class="t" style="top:983.66px;font-size:16px;color:#000;left:932.50px;transform:translateX(-50%);">Jan 2015</div>
<div class="t" style="top:983.66px;font-size:16px;color:#000;left:1194.00px;transform:translateX(-50%);">Mar 2019</div>
<div class="t" style="top:401.96px;font-size:16px;color:#000;right:1185.50px;">60,000.00</div>
<div class="t" style="top:448.36px;font-size:16px;color:#000;right:1185.50px;">50,000.00</div>
<div class="t" style="top:494.76px;font-size:16px;color:#000;right:1185.50px;">40,000.00</div>
<div class="t" style="top:541.16px;font-size:16px;color:#000;right:1185.50px;">30,000.00</div>
<div class="t" style="top:587.56px;font-size:16px;color:#000;right:1185.50px;">20,000.00</div>
<div class="t" style="top:633.96px;font-size:16px;color:#000;right:1185.50px;">10,000.00</div>
<div class="t" style="top:680.36px;font-size:16px;color:#000;right:1185.50px;">0.00</div>
<div class="t" style="top:726.76px;font-size:16px;color:#000;right:1185.50px;">-10,000.00</div>
<div class="t" style="top:773.16px;font-size:16px;color:#000;right:1185.50px;">-20,000.00</div>
<div class="t" style="top:819.56px;font-size:16px;color:#000;right:1185.50px;">-30,000.00</div>
<div class="t" style="top:865.96px;font-size:16px;color:#000;right:1185.50px;">-40,000.00</div>
<div class="t" style="top:912.36px;font-size:16px;color:#000;right:1185.50px;">-50,000.00</div>
<div class="t" style="top:968.96px;font-size:16px;color:#000;left:1604.00px;transform:translateX(-50%);">Consumer Discretionary</div>
<div class="t" style="top:968.96px;font-size:16px;color:#000;left:1800.00px;transform:translateX(-50%);">Energy</div>
<div class="t" style="top:968.96px;font-size:16px;color:#000;left:1996.20px;transform:translateX(-50%);">Health Care</div>
<div class="t" style="top:968.96px;font-size:16px;color:#000;left:2192.10px;transform:translateX(-50%);">Information Technology</div>
<div class="t" style="top:968.96px;font-size:16px;color:#000;left:2388.20px;transform:translateX(-50%);">Not Available</div>
<div style="position:absolute;left:48px;top:1011px;width:1233px;height:53px;background:#f0f2f2"></div>
<div style="position:absolute;left:344px;top:1011px;width:1.5px;height:110px;background:#d5d9df"></div>
<div class="t" style="top:1027.93px;font-size:21.7px;color:#556274;left:68.20px;">Position</div>
<div style="position:absolute;left:153.6px;top:1035.5px;width:0;height:0;border-left:6.3px solid transparent;border-right:6.3px solid transparent;border-top:7px solid #556274"></div>
<div class="t" style="top:1027.93px;font-size:21.7px;color:#556274;right:2123.40px;">07/31/2002</div>
<div style="position:absolute;left:526.7px;top:1024px;width:1.4px;height:26px;background:#d5d9df"></div>
<div class="t" style="top:1027.93px;font-size:21.7px;color:#556274;right:1940.20px;">08/31/2002</div>
<div style="position:absolute;left:709.9px;top:1024px;width:1.4px;height:26px;background:#d5d9df"></div>
<div class="t" style="top:1027.93px;font-size:21.7px;color:#556274;right:1758.00px;">09/30/2002</div>
<div style="position:absolute;left:892.1px;top:1024px;width:1.4px;height:26px;background:#d5d9df"></div>
<div class="t" style="top:1027.93px;font-size:21.7px;color:#556274;right:1574.80px;">10/31/2002</div>
<div style="position:absolute;left:1075.3px;top:1024px;width:1.4px;height:26px;background:#d5d9df"></div>
<div class="t" style="top:1027.93px;font-size:21.7px;color:#556274;right:1394.10px;">11/30/2002</div>
<div style="position:absolute;left:1256.0px;top:1024px;width:1.4px;height:26px;background:#d5d9df"></div>
<div class="t" style="top:1075.33px;font-size:21.7px;color:#333;left:68.20px;">Utilities</div>
<div class="t" style="top:1075.33px;font-size:21.7px;color:#333;right:2123.40px;">-</div>
<div class="t" style="top:1075.33px;font-size:21.7px;color:#333;right:1940.20px;">-</div>
<div class="t" style="top:1075.33px;font-size:21.7px;color:#333;right:1758.00px;">0.17</div>
<div class="t" style="top:1075.33px;font-size:21.7px;color:#333;right:1574.80px;">0.16</div>
<div class="t" style="top:1075.33px;font-size:21.7px;color:#333;right:1394.10px;">0.21</div>
<div class="t" style="top:1121.63px;font-size:21.7px;color:#333;left:68.20px;">Communication</div>
<div style="position:absolute;left:1351px;top:988.6px;width:1232px;height:52px;background:#f0f2f2"></div>
<div style="position:absolute;left:2127.3px;top:988.6px;width:1.5px;height:140px;background:#d5d9df"></div>
<div class="t" style="top:1004.63px;font-size:21.7px;color:#556274;left:1369.60px;">Position</div>
<div class="t" style="top:1004.63px;font-size:21.7px;color:#556274;right:68.50px;">PnL ($000)</div>
<div class="t" style="top:1052.33px;font-size:21.7px;color:#333;left:1369.60px;">Communication Services</div>
<div class="t" style="top:1052.33px;font-size:21.7px;color:#333;right:66.50px;">69,770.09</div>
<div class="t" style="top:1098.03px;font-size:21.7px;color:#333;left:1369.60px;">Consumer Discretionary</div>
<div class="t" style="top:1098.03px;font-size:21.7px;color:#333;right:66.50px;">43,920.79</div>
<div id="fade"></div>
</body></html>
